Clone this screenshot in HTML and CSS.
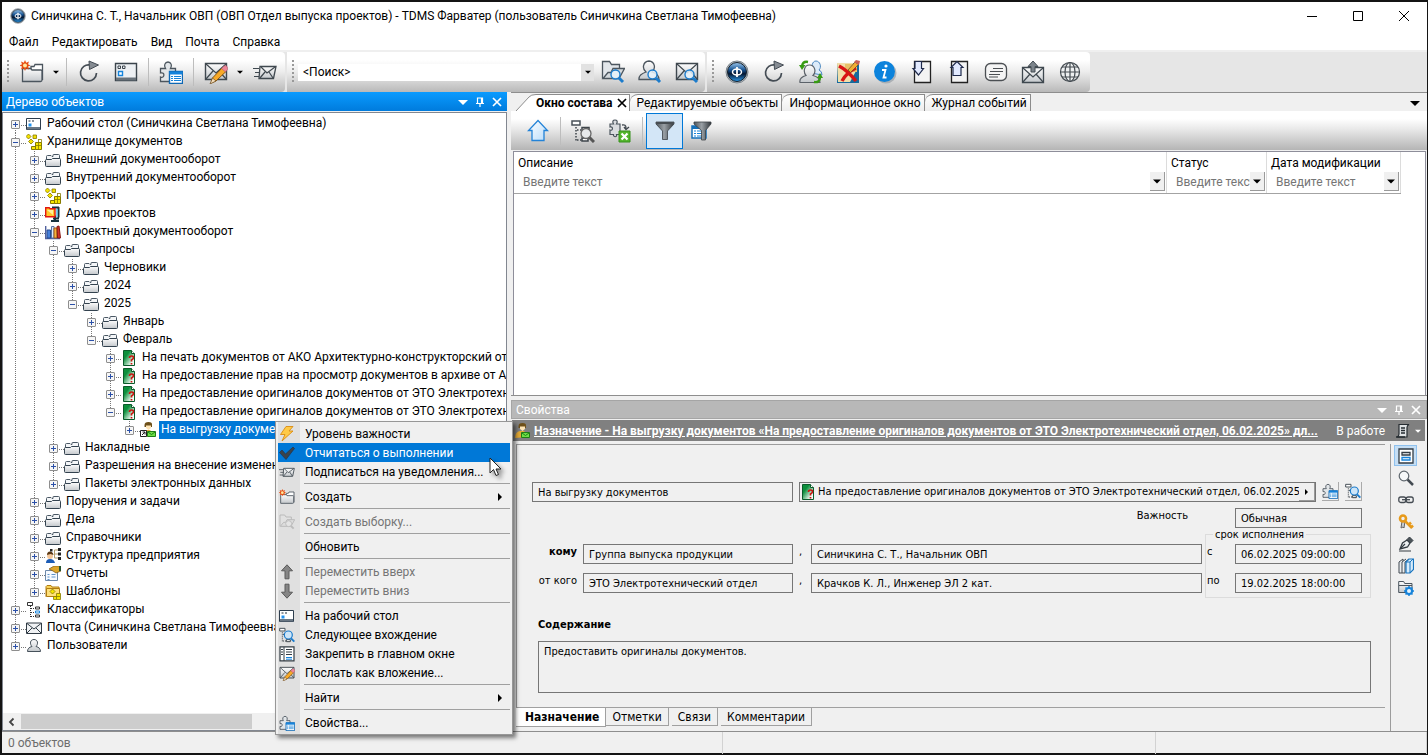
FILE: index.html
```html
<!DOCTYPE html>
<html lang="ru">
<head>
<meta charset="utf-8">
<title>TDMS Фарватер</title>
<link rel="stylesheet" href="styles.css">
</head>
<body>
<svg class="sprite" aria-hidden="true">
  <defs>
    <linearGradient id="g-orb" x1="0" y1="0" x2="0" y2="1"><stop offset="0" stop-color="#9cc8ee"/><stop offset=".4" stop-color="#14508f"/><stop offset=".6" stop-color="#04152f"/><stop offset="1" stop-color="#2a9cf0"/></linearGradient>
    <linearGradient id="g-gray" x1="0" y1="0" x2="0" y2="1"><stop offset="0" stop-color="#fdfdfd"/><stop offset="1" stop-color="#c4c8cc"/></linearGradient>
    <linearGradient id="g-doc" x1="0" y1="0" x2="1" y2="1"><stop offset=".3" stop-color="#0c8f3c"/><stop offset=".8" stop-color="#f4fbf5"/></linearGradient>
    <linearGradient id="g-funnel" x1="0" y1="0" x2="1" y2="0"><stop offset="0" stop-color="#4e555b"/><stop offset=".45" stop-color="#9aa0a5"/><stop offset="1" stop-color="#33383c"/></linearGradient>
    <linearGradient id="g-sky" x1="0" y1="0" x2="1" y2="1"><stop offset="0" stop-color="#fff"/><stop offset="1" stop-color="#b9dcfa"/></linearGradient>
  </defs>
  <symbol id="lens" viewBox="0 0 24 24"><path d="M18 18l4 4" stroke="#1c7ccc" stroke-width="3"/><circle cx="14.5" cy="14.5" r="4.5" fill="#e8f3fc" fill-opacity=".85" stroke="#1c7ccc" stroke-width="1.4"/></symbol>
  <symbol id="star" viewBox="0 0 24 24"><path d="M5 0l1.200 2.800L9 1.600 8 4.300 10.500 5.500 8 6.600 9 9.500 6.200 8.300 5 11 3.800 8.300 1 9.500 2 6.600-.5 5.500 2 4.300 1 1.600l2.800 1.200z" fill="#e84e10"/><circle cx="5" cy="5.500" r="2" fill="#ffe9a0"/></symbol>
  <symbol id="new-folder" viewBox="0 0 24 24"><path d="M11 10V6.500h3l1-2h7.500V20" fill="#fff" stroke="#4b555e" stroke-width="1.300"/><path d="M2.500 21.500v-12q0-1 1-1h7l1.500 1.500h9q1 0 1 1v9q0 1.500-1.500 1.500z" fill="url(#g-gray)" stroke="#4b555e" stroke-width="1.300"/><use href="#star" width="24" height="24"/></symbol>
  <symbol id="refresh" viewBox="0 0 24 24"><path d="M19.500 13a8 8 0 1 1-6.500-8" fill="none" stroke="#444c54" stroke-width="1.700"/><path d="M12 1l9.500 4-9 4.500z" fill="#858b92" stroke="#444c54"/></symbol>
  <symbol id="window" viewBox="0 0 24 24"><path d="M1.500 3.500h21v17h-21z" fill="#edf0f3" stroke="#3b444c" stroke-width="1.400"/><path d="M2 17.500h20v3H2z" fill="#69727a"/><path d="M4 6h2.500v2.500H4zM8.500 6H11v2.500H8.500z" fill="none" stroke="#3b444c"/><path d="M4.500 11.500h4v4h-4z" fill="#fff" stroke="#1684dc" stroke-width="1.400"/></symbol>
  <symbol id="puzzle" viewBox="0 0 24 24"><path d="M1.500 21.500V17c4 2 5-5.500 0-4V8.500h5c-2-3-.5-6.500 2.500-6.500s4.500 3.500 2.500 6.500h5v13z" fill="#e2e6e9" stroke="#4b555e" stroke-width="1.300"/><path d="M10.500 11.500h13v12h-13z" fill="#fff" stroke="#0f68b4" stroke-width="1.400"/><path d="M10.500 11.500h13v3h-13z" fill="#1683da"/><path d="M12 16.500h2m1 0h7M12 18.500h2m1 0h7M12 20.500h2m1 0h7" stroke="#1683da"/></symbol>
  <symbol id="mail" viewBox="0 0 24 24"><path d="M1.500 3.500h21v16h-21z" fill="url(#g-gray)" stroke="#3f484f" stroke-width="1.400"/><path d="M2 4l10 9L22 4M2 19l7-8m13 8l-7-8" fill="none" stroke="#3f484f" stroke-width="1.200"/></symbol>
  <symbol id="mail-pencil" viewBox="0 0 24 24"><use href="#mail" width="24" height="24"/><path d="M7 23l1.500-5L18 8l4 3.500L12 21z" fill="#f7a928" stroke="#855411"/><path d="M6 24l2.500-6 3.500 3z" fill="#f5dfbd" stroke="#6c4a20" stroke-width=".7"/><path d="M17.500 8.500L20 6q2-1 3 .5t.5 3L21.500 12z" fill="#ed8798" stroke="#a85566" stroke-width=".5"/></symbol>
  <symbol id="mail-send" viewBox="0 0 24 24"><path d="M7 6.500h16l-2.500 12H6z" fill="url(#g-gray)" stroke="#3f484f" stroke-width="1.300"/><path d="M8 7l6 6 8-6M7 18l5-6m8 6l-4-6M0 8.500h6M2 12.500h5M1 16.500h5" fill="none" stroke="#3f484f" stroke-width="1.200"/></symbol>
  <symbol id="folder-search" viewBox="0 0 24 24"><path d="M1.500 18.500v-17h7l2 3h8v4" fill="#e2e6ea" stroke="#4b555e" stroke-width="1.300"/><path d="M2 18.500l5-6h3l2-4h11.500L18 18.500z" fill="#d5dade" stroke="#4b555e" stroke-width="1.300"/><use href="#lens" width="24" height="24"/></symbol>
  <symbol id="user-search" viewBox="0 0 24 24"><path d="M1 19.500q-.5-5 7-7.500c-4-3-3.500-10.500 3-11 6 .5 7 7.500 3 11q7 2 7 7.500z" fill="url(#g-gray)" stroke="#4b555e" stroke-width="1.300"/><use href="#lens" width="24" height="24"/></symbol>
  <symbol id="mail-search" viewBox="0 0 24 24"><use href="#mail" width="24" height="24"/><use href="#lens" width="24" height="24"/></symbol>
  <symbol id="orb" viewBox="0 0 24 24"><circle cx="12" cy="12" r="11" fill="#b7bec4" stroke="#7b848b"/><circle cx="12" cy="12" r="9.500" fill="url(#g-orb)" stroke="#15202b"/><ellipse cx="12" cy="12" rx="4.500" ry="3" fill="none" stroke="#fff" stroke-width="1.500"/><path d="M12 7v10" stroke="#fff" stroke-width="1.800"/></symbol>
  <symbol id="users" viewBox="0 0 24 24"><path d="M12 13q0-2 3-3c-3-3-2-9 2-9s6 6 3 9q3 1 3 5z" fill="#dcebf9" stroke="#4a87c0"/><path d="M1 22.500q-1-5 6-7C4 12 5 5 10.500 5s7 7 3.500 10.500q7 2 7 7z" fill="url(#g-gray)" stroke="#5b6269" stroke-width="1.200"/><path d="M9 2Q4 1 3 6M15 22q6 1 6-5" fill="none" stroke="#379b12" stroke-width="2.400"/><path d="M0 5h6.500L3 10zM18 18h6l-3-5z" fill="#379b12"/></symbol>
  <symbol id="denied" viewBox="0 0 24 24"><path d="M1 3h22v20H1z" fill="#166a9d"/><path d="M1 3h16l3 8-6 11H2z" fill="#f1dfab"/><path d="M9 4h12v8H9z" fill="#e8c169"/><path d="M3 6q8 4 17 15M20 8Q11 12 6 21" fill="none" stroke="#d81515" stroke-width="3.500"/><path d="M12 10l7-8 3.500 2.500-8 8z" fill="#f1ad32" stroke="#654321" stroke-width=".7"/><path d="M18 2l2-2 4 1-1 4z" fill="#c76058"/></symbol>
  <symbol id="info" viewBox="0 0 24 24"><circle cx="13" cy="13" r="10.500" fill="#8d969e" opacity=".6"/><circle cx="11.500" cy="11.500" r="10.500" fill="#0c83dc"/><circle cx="13" cy="6" r="1.600" fill="#fff"/><path d="M9 10h3.500l-2 7.500h3" fill="none" stroke="#fff" stroke-width="1.800"/></symbol>
  <symbol id="page-down" viewBox="0 0 24 24"><path d="M4.500 1.500h16v21h-16z" fill="#f3f3f3" stroke="#222" stroke-width="1.300"/><path d="M5 1.500h6.500v7h2L8.500 15 3 8.500h2z" fill="#e2eaff" stroke="#1f2a4c" stroke-width="1.200"/></symbol>
  <symbol id="page-up" viewBox="0 0 24 24"><path d="M4.500 1.500h16v21h-16z" fill="#f3f3f3" stroke="#222" stroke-width="1.300"/><path d="M6 15.500h8v-8h2L10 1.500 4 7.500h2z" fill="#e2eaff" stroke="#1f2a4c" stroke-width="1.200"/></symbol>
  <symbol id="chat" viewBox="0 0 24 24"><rect x="1.500" y="3.500" width="21" height="17" rx="5" fill="#f4f4f4" stroke="#4b4f53" stroke-width="1.300"/><path d="M9 8.500h10M6 11.500h13M5 14.500h11M5 17h9" stroke="#4b4f53" stroke-width="1.200"/></symbol>
  <symbol id="mail-up" viewBox="0 0 24 24"><path d="M1.500 7.500h21v15h-21z" fill="url(#g-gray)" stroke="#3f484f" stroke-width="1.300"/><path d="M2 8l10 9L22 8M2 22l7-8m13 8l-7-8" fill="none" stroke="#3f484f" stroke-width="1.200"/><path d="M12 1l5 5.500h-3V12h-4V6.500H7z" fill="#7c848b" stroke="#444c53"/></symbol>
  <symbol id="globe" viewBox="0 0 24 24"><g fill="none" stroke="#444b51" stroke-width="1.200"><circle cx="12" cy="12" r="9.500" fill="#eef0f1"/><ellipse cx="12" cy="12" rx="5" ry="9.500"/><path d="M12 2.500v19M2.500 12h19M4 7h16M4 17h16"/></g></symbol>
  <symbol id="up" viewBox="0 0 24 24"><path d="M12 1.500l9.500 10H18v10H6v-10H2.500z" fill="url(#g-sky)" stroke="#2383d8" stroke-width="1.300"/></symbol>
  <symbol id="tree-search" viewBox="0 0 24 24"><path d="M1 2h8v4H1z" fill="#fff" stroke="#4a5259" stroke-width="1.500"/><path d="M5 8v14M6 11h4M6 21h5" stroke="#3c4349" stroke-width="1.500" stroke-dasharray="1.500 1.500"/><path d="M11 8.500h7v3h-7zM11 19h6v3h-6z" fill="#fff" stroke="#3c4349" stroke-width="1.500"/></symbol>
  <symbol id="tree-lens" viewBox="0 0 24 24"><use href="#tree-search" width="24" height="24"/><path d="M18 17l5 5" stroke="#1c7ccc" stroke-width="3"/><circle cx="14" cy="12" r="6" fill="#cde5f8" stroke="#1c7ccc" stroke-width="1.800"/></symbol>
  <symbol id="tree-lens-gray" viewBox="0 0 24 24"><use href="#tree-search" width="24" height="24"/><path d="M18 18l5 5" stroke="#555" stroke-width="3"/><circle cx="15" cy="14.500" r="5" fill="#e7e9eb" stroke="#666" stroke-width="1.300"/></symbol>
  <symbol id="puzzle-x" viewBox="0 0 24 24"><path d="M2 15.500V11c3 1.500 3.500-4 0-3V5h3.500C4 2.500 5 1 7 1s3 1.500 1.500 4H12v10.500H8.500c1 3-3.500 3-3 0z" fill="#d9dcdf" stroke="#4b555e" stroke-width="1.200"/><path d="M14 6q4-1 4 3m-2-1l2 2.500 3-2.500" fill="none" stroke="#414950" stroke-width="1.300"/><path d="M11 12h11v11H11z" fill="#54b52d" stroke="#34901a"/><path d="M13.500 14.500l6 6m0-6l-6 6" stroke="#fff" stroke-width="2.200"/></symbol>
  <symbol id="funnel" viewBox="0 0 24 24"><path d="M3 3h18v2l-6.500 7v8.500h-5V12L3 5z" fill="url(#g-funnel)" stroke="#3c4247" stroke-width=".8"/><path d="M3 3h18v2H3z" fill="#474d52"/></symbol>
  <symbol id="funnel-table" viewBox="0 0 24 24"><path d="M2 7h14v12H2z" fill="#fff" stroke="#1470ba" stroke-width="1.500"/><path d="M2 7h14v3H2z" fill="#1470ba"/><path d="M4 12h2m1 0h9M4 14.500h2m1 0h9M4 17h2m1 0h9" stroke="#1683da"/><path d="M4 3h17v2l-5.500 6.500V21h-4v-9.500L4 5z" fill="url(#g-funnel)" stroke="#3c4247" stroke-width=".8"/></symbol>

  <symbol id="desk" viewBox="0 0 16 16"><path d="M.5 2.500h14v11H.5z" fill="#fff" stroke="#2d3d4d"/><path d="M1 11h13v2.500H1z" fill="#6a7784"/><path d="M2.500 4.500h2v1h-2zM6 4.500h2v1H6z" fill="#1d2d3d"/><path d="M2.500 7.500h3v3h-3z" fill="#2192ef"/></symbol>
  <symbol id="blocks" viewBox="0 0 16 16"><path d="M2.500 0L5 2.500 2.500 5 0 2.500zM7 1h3.500v3.500H7zM5 5l2.500 2.500L5 10 2.500 7.500z" fill="#f4e100" stroke="#867a00" stroke-width=".8"/><path d="M9.500 15.500v-7h6v7zM5.500 15.500v-3h4v3z" fill="#f8e800" stroke="#867a00"/><path d="M12.500 5v10M9 11.500h6M12.500 5.500h3v3" fill="none" stroke="#867a00" stroke-width=".8"/></symbol>
  <symbol id="folder" viewBox="0 0 16 16"><path d="M1.500 8V4.500q0-1 1-1h3.500l1 1h1V3q0-.5.500-.5h5q1 0 1 1V8" fill="#f4f6f8" stroke="#4b5865"/><path d="M.5 8.500q0-1 1-1h5l1-1h7q1 0 1 1v6q0 1-1 1h-13q-1 0-1-1z" fill="url(#g-gray)" stroke="#33424f"/></symbol>
  <symbol id="archive" viewBox="0 0 16 16"><path d="M7 1.500h7M13.500 1v10.500M8 12.500h6M10 9.500v6M6 15h8" stroke="#17323e" stroke-width="2"/><path d="M12 3v8" stroke="#53bfe7" stroke-width="1.500"/><path d="M.7 1.700h3.500l1 1H10v8H.7z" fill="#ffc729" stroke="#e21610" stroke-width="1.400"/><path d="M2 4l6 5V4z" fill="#fff09b"/></symbol>
  <symbol id="books" viewBox="0 0 16 16"><path d="M.7 2v12.500H15" fill="none" stroke="#51619e" stroke-width="1.400"/><path d="M2 6h3.500v8H2z" fill="#4680da" stroke="#244b91"/><path d="M6.500 2.500H9V14H6.500z" fill="#ddeafc" stroke="#5772a1"/><path d="M9 4h3v10H9z" fill="#f5b23a" stroke="#9d5818"/><path d="M12 2.500l2-.5 1.500 12h-3z" fill="#d4342a" stroke="#86160f"/></symbol>
  <symbol id="doc" viewBox="0 0 16 16"><path d="M2.500.5h8l3 3v12h-11z" fill="url(#g-doc)" stroke="#0a5a2a"/><path d="M10.500.5v3h3" fill="#fff" stroke="#0a5a2a"/><path d="M8.500 8q0-2 2-2t2 1.500-2 2.500v1.500M10.500 13v1.500" fill="none" stroke="#c81712" stroke-width="1.700"/></symbol>
  <symbol id="assign" viewBox="0 0 16 16"><path d="M4.500 3q0-3 4-3t3.500 3v2H4.500z" fill="#6e5019"/><path d="M6 3.500h5v2.500l-2.500 2L6 6z" fill="#ffe5b5"/><path d="M1 15q0-6 5-7h4l3 3v3z" fill="#e3a936"/><path d="M7.500 9.500h8v5h-8z" fill="#6ee046" stroke="#1e7e16"/><path d="M8 10l3.500 2.500L15 10" fill="none" stroke="#1e7e16"/></symbol>
  <symbol id="assign-link" viewBox="0 0 16 16"><use href="#assign" width="16" height="16"/><path d="M.5 8.500h6v6h-6z" fill="#fff" stroke="#222"/><path d="M2 13l3-3m-2.500 0H5v2.500" fill="none" stroke="#222"/></symbol>
  <symbol id="org" viewBox="0 0 16 16"><path d="M1 15q0-4 4-4t5 4z" fill="#1b5bb5"/><circle cx="5" cy="8" r="3" fill="#f4c79a"/><path d="M2 7q0-3.500 3-3.500T8.500 7l-3-1z" fill="#5a3713"/><path d="M9.500 2v8M9.500 2h4M9.500 6h4M9.500 10h4" stroke="#b59c6a"/><path d="M13 0h3v3h-3zM13 4.500h3v3h-3zM13 9h3v3h-3zM5 1h2.500v2.500H5z" fill="#222"/></symbol>
  <symbol id="report" viewBox="0 0 16 16"><path d="M.5 4.500h12v10H.5z" fill="#f6faff" stroke="#6d89aa"/><path d="M2.500 8.500h2m2 0h4m-8 2.500h2m2 0h4m-8 2.500h2" stroke="#5f92c9"/><path d="M4 3l5-3h7v5l-5 2-3-2z" fill="#dca52a" stroke="#76500f" stroke-width=".7"/><path d="M14 0h2v5h-2z" fill="#25532d"/></symbol>
  <symbol id="template" viewBox="0 0 16 16"><path d="M1 12.500V2.500l1-1h4l1 1.500h7v2H4z" fill="#f8d257" stroke="#b17c12"/><path d="M1.500 12.500v-8h13v8z" fill="#ffe17b" stroke="#b17c12"/><path d="M7.500 5L10 7.500 7.500 10 5 7.500zM8.500 15.500v-3h3v-3h4v6zM11.500 12v3M12 12.500h3" fill="#f5e400" stroke="#867a00" stroke-width=".8"/></symbol>
  <symbol id="classif" viewBox="0 0 16 16"><path d="M1.500.5h5v3h-5z" fill="#fff" stroke="#333"/><path d="M4.500 4v11M5 6.500h3M5 10.500h3M5 14.500h3" stroke="#333" stroke-dasharray="1 1"/><path d="M9.500 5h4v2h-4zM9.500 13h4v2h-4z" fill="#fff" stroke="#333"/><path d="M9.500 9h4v2h-4z" fill="#fff" stroke="#1683da"/></symbol>
  <symbol id="mail16" viewBox="0 0 16 16"><path d="M.5 3h15v10.500H.5z" fill="#f0f2f4" stroke="#303b45"/><path d="M1 3.500L8 9l7-5.500M1 13l5-5m9 5l-5-5" fill="none" stroke="#303b45"/></symbol>
  <symbol id="user" viewBox="0 0 16 16"><path d="M1.500 13.500q0-4 4.500-5C3.500 6 4 1.500 8 1.500s4.500 4.500 2 7q4.500 1 4.500 5z" fill="url(#g-gray)" stroke="#46515b"/></symbol>
  <symbol id="bolt" viewBox="0 0 16 16"><path d="M7 .5h7L10 5h4L3 15l3-6.500H1.500z" fill="#ffca46" stroke="#d98b12" stroke-width=".9"/></symbol>
  <symbol id="check" viewBox="0 0 16 16"><path d="M.5 7.500L3 5l3.500 4L14 2l1.500 1.500L7 14.500z" fill="#3b434a" stroke="#1f3550" stroke-width=".7"/></symbol>
  <symbol id="arrow-up" viewBox="0 0 16 16"><path d="M8 .800l5.500 6H10v8H6v-8H2.500z" fill="#858585" stroke="#5a5a5a"/></symbol>
  <symbol id="arrow-down" viewBox="0 0 16 16"><path d="M8 15.200l5.500-6H10v-8H6v8H2.500z" fill="#858585" stroke="#5a5a5a"/></symbol>
  <symbol id="dock" viewBox="0 0 16 16"><path d="M1 .800h14v14H1z" fill="#fff" stroke="#333c44" stroke-width="1.200"/><path d="M5 1v14M7 3.500h6M7 6h6M7 8.500h6M2 3.500h2M2 6h2M2 8.500h2" stroke="#333c44"/><path d="M7 11.500h6M7 13.200h6" stroke="#1683da"/></symbol>
  <symbol id="card" viewBox="0 0 16 16"><path d="M1 1h14v14H1z" fill="#fff" stroke="#333c44" stroke-width="1.300"/><path d="M4 4.500h8v2.500H4z" fill="#fff" stroke="#333c44" stroke-width="1.300"/><path d="M4 9.500h8V12H4z" fill="#fff" stroke="#1683da" stroke-width="1.300"/></symbol>
  <symbol id="mag" viewBox="0 0 16 16"><path d="M9.500 9.500L15 15" stroke="#444b52" stroke-width="2.500"/><circle cx="6" cy="6" r="4.800" fill="#f6f8f9" stroke="#5f676e" stroke-width="1.200"/></symbol>
  <symbol id="chain" viewBox="0 0 16 16"><g fill="none" stroke="#444b52" stroke-width="1.300"><rect x=".8" y="5" width="7" height="5.500" rx="2"/><rect x="8.200" y="5" width="7" height="5.500" rx="2"/><path d="M4 7.700h8"/></g></symbol>
  <symbol id="key" viewBox="0 0 16 16"><path d="M4 7l-1 7 2-1 1 1 1-7z" fill="#c8ccd0" stroke="#666"/><circle cx="5" cy="4.500" r="3" fill="none" stroke="#e79a1b" stroke-width="2.600"/><path d="M7 7l7 7m-3-3.500l2-2m0 5l2-2" stroke="#e79a1b" stroke-width="2.500"/></symbol>
  <symbol id="pen" viewBox="0 0 16 16"><path d="M2 13l2.500-6L9 4l3 3-2.500 4z" fill="#edf0f2" stroke="#343c43" stroke-width="1.300"/><path d="M9 3.500L11.500 1 15 4.500 12.500 7z" fill="#4b5359" stroke="#343c43"/><path d="M2.500 12.500L7 8M1 15h12" stroke="#343c43" stroke-width="1.200"/></symbol>
  <symbol id="volumes" viewBox="0 0 16 16"><path d="M1 15V4l4-3v2M1 15h3V4l4-3M4 15h3V4l4-3" fill="#e9edf0" stroke="#404950"/><path d="M8 4l3-3h4.500v10.500L12 15H8z" fill="#d8ecfb" stroke="#1875bf" stroke-width="1.200"/><path d="M12 4v11M8 4h4l3-3" fill="none" stroke="#1875bf"/></symbol>
  <symbol id="folder-gear" viewBox="0 0 16 16"><path d="M.7 12.500V1.500h5l1 2H14v9z" fill="url(#g-gray)" stroke="#4b555e"/><path d="M1 5.500h13" stroke="#4b555e"/><circle cx="11" cy="11" r="3" fill="#e6f3fc" stroke="#1683da" stroke-width="2"/><path d="M11 6v2m0 6v2M6 11h2m6 0h2M7.500 7.500L9 9m4 4l1.500 1.500m0-7L13 9m-4 4l-1.500 1.500" stroke="#1683da" stroke-width="1.500"/></symbol>
  <symbol id="scroll" viewBox="0 0 16 16"><path d="M4 1.500h10q-2 1-2 3v9.500H2q2-.5 2-3z" fill="#dfe2e4" stroke="#262c31" stroke-width="1.200"/><path d="M6 5h4M6 7.500h4M6 10h4M1 14h9" stroke="#262c31" stroke-width="1.300"/></symbol>
  <symbol id="pin" viewBox="0 0 10 10"><path d="M2.500 6V1h5v5M1 6.500h8M5 7v3M6.500 1v5" fill="none" stroke="currentColor" stroke-width="1.200"/></symbol>
  <symbol id="close" viewBox="0 0 10 10"><path d="M1 1l8 8M9 1L1 9" fill="none" stroke="currentColor" stroke-width="1.700"/></symbol>
  <symbol id="caret" viewBox="0 0 10 10"><path d="M0 3h10L5 8z" fill="currentColor"/></symbol>
</svg>

<div class="window">
  <header class="titlebar">
    <svg class="i16"><use href="#orb"/></svg>
    <h1 class="caption">Синичкина С. Т., Начальник ОВП (ОВП Отдел выпуска проектов) - TDMS Фарватер (пользователь Синичкина Светлана Тимофеевна)</h1>
    <button class="sys" aria-label="Свернуть"><svg class="i12" viewBox="0 0 12 12"><path d="M1 6.500h10" stroke="#000"/></svg></button>
    <button class="sys" aria-label="Развернуть"><svg class="i12" viewBox="0 0 12 12"><path d="M1.500 1.500h9v9h-9z" fill="none" stroke="#000"/></svg></button>
    <button class="sys" aria-label="Закрыть"><svg class="i12" viewBox="0 0 12 12"><path d="M1 1l10 10M11 1L1 11" stroke="#000"/></svg></button>
  </header>
  <nav class="menubar">
    <button>Файл</button><button>Редактировать</button><button>Вид</button><button>Почта</button><button>Справка</button>
  </nav>

  <div class="bands">
    <div class="band">
      <span class="grip"></span>
      <button class="tool" aria-label="Создать"><svg class="i24"><use href="#new-folder"/></svg></button>
      <button class="drop" aria-label="Варианты создания"><svg class="i6"><use href="#caret"/></svg></button>
      <span class="rule"></span>
      <button class="tool" aria-label="Обновить"><svg class="i24"><use href="#refresh"/></svg></button>
      <button class="tool" aria-label="Рабочий стол"><svg class="i24"><use href="#window"/></svg></button>
      <span class="rule"></span>
      <button class="tool" aria-label="Свойства"><svg class="i24"><use href="#puzzle"/></svg></button>
      <span class="rule"></span>
      <button class="tool" aria-label="Написать письмо"><svg class="i24"><use href="#mail-pencil"/></svg></button>
      <button class="drop" aria-label="Варианты письма"><svg class="i6"><use href="#caret"/></svg></button>
      <button class="tool" aria-label="Подписаться"><svg class="i24"><use href="#mail-send"/></svg></button>
    </div>
    <div class="band finder">
      <span class="grip"></span>
      <div class="search">
        <input type="text" value="&lt;Поиск&gt;" aria-label="Поиск">
        <button class="arrow" aria-label="Список поиска"><svg class="i6"><use href="#caret"/></svg></button>
      </div>
      <button class="tool" aria-label="Поиск в папках"><svg class="i24"><use href="#folder-search"/></svg></button>
      <button class="tool" aria-label="Поиск пользователей"><svg class="i24"><use href="#user-search"/></svg></button>
      <button class="tool" aria-label="Поиск писем"><svg class="i24"><use href="#mail-search"/></svg></button>
    </div>
    <div class="band">
      <span class="grip"></span>
      <button class="tool" aria-label="Фарватер"><svg class="i24"><use href="#orb"/></svg></button>
      <button class="tool" aria-label="Обновить окно"><svg class="i24"><use href="#refresh"/></svg></button>
      <button class="tool" aria-label="Сменить пользователя"><svg class="i24"><use href="#users"/></svg></button>
      <button class="tool" aria-label="Отменить правку"><svg class="i24"><use href="#denied"/></svg></button>
      <button class="tool" aria-label="Справка"><svg class="i24"><use href="#info"/></svg></button>
      <button class="tool" aria-label="Загрузить"><svg class="i24"><use href="#page-down"/></svg></button>
      <button class="tool" aria-label="Выгрузить"><svg class="i24"><use href="#page-up"/></svg></button>
      <button class="tool" aria-label="Сообщения"><svg class="i24"><use href="#chat"/></svg></button>
      <button class="tool" aria-label="Отправить"><svg class="i24"><use href="#mail-up"/></svg></button>
      <button class="tool" aria-label="Веб"><svg class="i24"><use href="#globe"/></svg></button>
    </div>
  </div>

  <main class="work">
    <section class="left">
      <div class="pane-title blue">
        <h2>Дерево объектов</h2>
        <button aria-label="Меню панели"><svg class="i10"><use href="#caret"/></svg></button>
        <button aria-label="Закрепить панель"><svg class="i10"><use href="#pin"/></svg></button>
        <button aria-label="Закрыть панель"><svg class="i10"><use href="#close"/></svg></button>
      </div>
      <div class="treebox">
        <ul class="tree">
          <li><div class="node"><button class="exp plus" aria-label="Раскрыть"></button><svg class="i16"><use href="#desk"/></svg><span>Рабочий стол (Синичкина Светлана Тимофеевна)</span></div></li>
          <li><div class="node"><button class="exp" aria-label="Свернуть"></button><svg class="i16"><use href="#blocks"/></svg><span>Хранилище документов</span></div>
            <ul>
              <li><div class="node"><button class="exp plus" aria-label="Раскрыть"></button><svg class="i16"><use href="#folder"/></svg><span>Внешний документооборот</span></div></li>
              <li><div class="node"><button class="exp plus" aria-label="Раскрыть"></button><svg class="i16"><use href="#folder"/></svg><span>Внутренний документооборот</span></div></li>
              <li><div class="node"><button class="exp plus" aria-label="Раскрыть"></button><svg class="i16"><use href="#blocks"/></svg><span>Проекты</span></div></li>
              <li><div class="node"><button class="exp plus" aria-label="Раскрыть"></button><svg class="i16"><use href="#archive"/></svg><span>Архив проектов</span></div></li>
              <li><div class="node"><button class="exp" aria-label="Свернуть"></button><svg class="i16"><use href="#books"/></svg><span>Проектный документооборот</span></div>
                <ul>
                  <li><div class="node"><button class="exp" aria-label="Свернуть"></button><svg class="i16"><use href="#folder"/></svg><span>Запросы</span></div>
                    <ul>
                      <li><div class="node"><button class="exp plus" aria-label="Раскрыть"></button><svg class="i16"><use href="#folder"/></svg><span>Черновики</span></div></li>
                      <li><div class="node"><button class="exp plus" aria-label="Раскрыть"></button><svg class="i16"><use href="#folder"/></svg><span>2024</span></div></li>
                      <li><div class="node"><button class="exp" aria-label="Свернуть"></button><svg class="i16"><use href="#folder"/></svg><span>2025</span></div>
                        <ul>
                          <li><div class="node"><button class="exp plus" aria-label="Раскрыть"></button><svg class="i16"><use href="#folder"/></svg><span>Январь</span></div></li>
                          <li><div class="node"><button class="exp" aria-label="Свернуть"></button><svg class="i16"><use href="#folder"/></svg><span>Февраль</span></div>
                            <ul>
                              <li><div class="node"><button class="exp plus" aria-label="Раскрыть"></button><svg class="i16"><use href="#doc"/></svg><span>На печать документов от АКО Архитектурно-конструкторский отдел</span></div></li>
                              <li><div class="node"><button class="exp plus" aria-label="Раскрыть"></button><svg class="i16"><use href="#doc"/></svg><span>На предоставление прав на просмотр документов в архиве от АКО</span></div></li>
                              <li><div class="node"><button class="exp plus" aria-label="Раскрыть"></button><svg class="i16"><use href="#doc"/></svg><span>На предоставление оригиналов документов от ЭТО Электротехнический</span></div></li>
                              <li><div class="node"><button class="exp" aria-label="Свернуть"></button><svg class="i16"><use href="#doc"/></svg><span>На предоставление оригиналов документов от ЭТО Электротехнический</span></div>
                                <ul>
                                  <li><div class="node selected"><button class="exp plus" aria-label="Раскрыть"></button><svg class="i16"><use href="#assign-link"/></svg><span>На выгрузку документов</span></div></li>
                                </ul>
                              </li>
                            </ul>
                          </li>
                        </ul>
                      </li>
                    </ul>
                  </li>
                  <li><div class="node"><button class="exp plus" aria-label="Раскрыть"></button><svg class="i16"><use href="#folder"/></svg><span>Накладные</span></div></li>
                  <li><div class="node"><button class="exp plus" aria-label="Раскрыть"></button><svg class="i16"><use href="#folder"/></svg><span>Разрешения на внесение изменений</span></div></li>
                  <li><div class="node"><button class="exp plus" aria-label="Раскрыть"></button><svg class="i16"><use href="#folder"/></svg><span>Пакеты электронных данных</span></div></li>
                </ul>
              </li>
              <li><div class="node"><button class="exp plus" aria-label="Раскрыть"></button><svg class="i16"><use href="#folder"/></svg><span>Поручения и задачи</span></div></li>
              <li><div class="node"><button class="exp plus" aria-label="Раскрыть"></button><svg class="i16"><use href="#folder"/></svg><span>Дела</span></div></li>
              <li><div class="node"><button class="exp plus" aria-label="Раскрыть"></button><svg class="i16"><use href="#folder"/></svg><span>Справочники</span></div></li>
              <li><div class="node"><button class="exp plus" aria-label="Раскрыть"></button><svg class="i16"><use href="#org"/></svg><span>Структура предприятия</span></div></li>
              <li><div class="node"><button class="exp plus" aria-label="Раскрыть"></button><svg class="i16"><use href="#report"/></svg><span>Отчеты</span></div></li>
              <li><div class="node"><button class="exp plus" aria-label="Раскрыть"></button><svg class="i16"><use href="#template"/></svg><span>Шаблоны</span></div></li>
            </ul>
          </li>
          <li><div class="node"><button class="exp plus" aria-label="Раскрыть"></button><svg class="i16"><use href="#classif"/></svg><span>Классификаторы</span></div></li>
          <li><div class="node"><button class="exp plus" aria-label="Раскрыть"></button><svg class="i16"><use href="#mail16"/></svg><span>Почта (Синичкина Светлана Тимофеевна)</span></div></li>
          <li><div class="node"><button class="exp plus" aria-label="Раскрыть"></button><svg class="i16"><use href="#user"/></svg><span>Пользователи</span></div></li>
        </ul>
        <div class="scroll"><button aria-label="Прокрутить влево"><svg class="i10" viewBox="0 0 10 10"><path d="M6.500 1.500L3 5l3.500 3.500" fill="none" stroke="#444" stroke-width="1.800"/></svg></button><span class="thumb"></span></div>
      </div>
    </section>

    <div class="right">
      <section class="content">
        <div class="tabs">
          <button class="tab active"><svg class="slant" viewBox="0 0 20 17"><path d="M0 17L13 3Q15 .500 20 .500V17z" fill="#fff"/><path d="M0 17L13 3Q15 .500 20 .500" fill="none" stroke="#8c8c8c"/></svg><span>Окно состава</span><svg class="i10"><use href="#close"/></svg></button>
          <button class="tab">Редактируемые объекты</button>
          <button class="tab">Информационное окно</button>
          <button class="tab">Журнал событий</button>
          <button class="tabmenu" aria-label="Список вкладок"><svg class="i10"><use href="#caret"/></svg></button>
        </div>
        <div class="subbar">
          <button class="tool" aria-label="Вверх"><svg class="i24"><use href="#up"/></svg></button>
          <span class="rule"></span>
          <button class="tool" aria-label="Найти в дереве"><svg class="i24"><use href="#tree-lens-gray"/></svg></button>
          <button class="tool" aria-label="Экспорт в Excel"><svg class="i24"><use href="#puzzle-x"/></svg></button>
          <span class="rule"></span>
          <button class="tool on" aria-label="Фильтр"><svg class="i24"><use href="#funnel"/></svg></button>
          <button class="tool" aria-label="Фильтр таблицы"><svg class="i24"><use href="#funnel-table"/></svg></button>
        </div>
        <div class="listbox">
          <table class="list">
            <colgroup><col><col class="c-status"><col class="c-date"></colgroup>
            <thead><tr>
              <th><label for="f1">Описание</label><div class="filter"><input id="f1" type="text" placeholder="Введите текст"><button class="arrow" aria-label="Фильтр описания"><svg class="i8"><use href="#caret"/></svg></button></div></th>
              <th><label for="f2">Статус</label><div class="filter"><input id="f2" type="text" placeholder="Введите текст"><button class="arrow" aria-label="Фильтр статуса"><svg class="i8"><use href="#caret"/></svg></button></div></th>
              <th><label for="f3">Дата модификации</label><div class="filter"><input id="f3" type="text" placeholder="Введите текст"><button class="arrow" aria-label="Фильтр даты"><svg class="i8"><use href="#caret"/></svg></button></div></th>
            </tr></thead>
          </table>
        </div>
      </section>

      <section class="props">
        <div class="pane-title gray">
          <h2>Свойства</h2>
          <button aria-label="Меню панели свойств"><svg class="i10"><use href="#caret"/></svg></button>
          <button aria-label="Закрепить свойства"><svg class="i10"><use href="#pin"/></svg></button>
          <button aria-label="Закрыть свойства"><svg class="i10"><use href="#close"/></svg></button>
        </div>
        <div class="objhead">
          <svg class="i16"><use href="#assign"/></svg>
          <a href="#object">Назначение - На выгрузку документов «На предоставление оригиналов документов от ЭТО Электротехнический отдел, 06.02.2025» дл...</a>
          <span>В работе</span>
          <button aria-label="Журнал"><svg class="i16"><use href="#scroll"/></svg></button>
          <button aria-label="Действия"><svg class="i6"><use href="#caret"/></svg></button>
        </div>
        <div class="propbody">
          <div class="formcol">
            <form class="form">
              <div class="first">
                <input class="box" type="text" readonly aria-label="Вид" value="На выгрузку документов">
                <div class="box combo"><svg class="i16"><use href="#doc"/></svg><input type="text" readonly aria-label="Основание" value="На предоставление оригиналов документов от ЭТО Электротехнический отдел, 06.02.2025"><button type="button" aria-label="Открыть"><svg class="i8" viewBox="0 0 8 8"><path d="M2 1l3 3-3 3z"/></svg></button></div>
                <button class="mini" type="button" aria-label="Свойства объекта"><svg class="i16"><use href="#puzzle"/></svg></button>
                <button class="mini" type="button" aria-label="Показать в дереве"><svg class="i16"><use href="#tree-lens"/></svg></button>
              </div>
              <div class="importance"><label for="imp">Важность</label><input class="box date" id="imp" type="text" readonly value="Обычная"></div>
              <div class="people">
                <div class="who">
                  <label class="strong" for="to">кому</label><input class="box" id="to" type="text" readonly value="Группа выпуска продукции"><span>,</span><input class="box" type="text" readonly aria-label="Получатель" value="Синичкина С. Т., Начальник ОВП">
                  <label for="from">от кого</label><input class="box" id="from" type="text" readonly value="ЭТО Электротехнический отдел"><span>,</span><input class="box" type="text" readonly aria-label="Отправитель" value="Крачков К. Л., Инженер ЭЛ 2 кат.">
                </div>
                <fieldset class="term">
                  <legend>срок исполнения</legend>
                  <div class="termline"><label for="d1">с</label><input class="box date" id="d1" type="text" readonly value="06.02.2025 09:00:00"></div>
                  <div class="termline"><label for="d2">по</label><input class="box date" id="d2" type="text" readonly value="19.02.2025 18:00:00"></div>
                </fieldset>
              </div>
              <label class="strong body-label" for="body">Содержание</label>
              <textarea class="box" id="body" readonly>Предоставить оригиналы документов.</textarea>
            </form>
            <div class="formtabs"><button class="on">Назначение</button><button>Отметки</button><button>Связи</button><button>Комментарии</button></div>
          </div>
          <div class="side">
            <button class="on" aria-label="Карточка"><svg class="i16"><use href="#card"/></svg></button>
            <button aria-label="Просмотр"><svg class="i16"><use href="#mag"/></svg></button>
            <button aria-label="Связи"><svg class="i16"><use href="#chain"/></svg></button>
            <button aria-label="Права"><svg class="i16"><use href="#key"/></svg></button>
            <button aria-label="Подписи"><svg class="i16"><use href="#pen"/></svg></button>
            <button aria-label="Версии"><svg class="i16"><use href="#volumes"/></svg></button>
            <button aria-label="Настройки папки"><svg class="i16"><use href="#folder-gear"/></svg></button>
          </div>
        </div>
      </section>
    </div>
  </main>

  <footer class="status"><span>0 объектов</span><span></span><span></span></footer>

  <div class="context" role="menu">
    <button role="menuitem"><svg class="i16"><use href="#bolt"/></svg><span>Уровень важности</span></button>
    <button role="menuitem" class="hot"><svg class="i16"><use href="#check"/></svg><span>Отчитаться о выполнении</span></button>
    <button role="menuitem"><svg class="i16"><use href="#mail-send"/></svg><span>Подписаться на уведомления...</span></button>
    <hr>
    <button role="menuitem"><svg class="i16"><use href="#new-folder"/></svg><span>Создать</span><svg class="i8" viewBox="0 0 8 8"><path d="M2 0l4 4-4 4z"/></svg></button>
    <hr>
    <button role="menuitem" disabled><svg class="i16 faded"><use href="#folder-search"/></svg><span>Создать выборку...</span></button>
    <hr>
    <button role="menuitem"><svg class="i16"></svg><span>Обновить</span></button>
    <hr>
    <button role="menuitem" disabled><svg class="i16"><use href="#arrow-up"/></svg><span>Переместить вверх</span></button>
    <button role="menuitem" disabled><svg class="i16"><use href="#arrow-down"/></svg><span>Переместить вниз</span></button>
    <hr>
    <button role="menuitem"><svg class="i16"><use href="#desk"/></svg><span>На рабочий стол</span></button>
    <button role="menuitem"><svg class="i16"><use href="#tree-lens"/></svg><span>Следующее вхождение</span></button>
    <button role="menuitem"><svg class="i16"><use href="#dock"/></svg><span>Закрепить в главном окне</span></button>
    <button role="menuitem"><svg class="i16"><use href="#mail-pencil"/></svg><span>Послать как вложение...</span></button>
    <hr>
    <button role="menuitem"><svg class="i16"></svg><span>Найти</span><svg class="i8" viewBox="0 0 8 8"><path d="M2 0l4 4-4 4z"/></svg></button>
    <hr>
    <button role="menuitem"><svg class="i16"><use href="#puzzle"/></svg><span>Свойства...</span></button>
    <svg class="pointer" viewBox="0 0 14 20"><path d="M1 1v15l3.500-3.500L7 18.500l2.500-1L7 12h5z" fill="#fff" stroke="#222"/></svg>
  </div>
</div>
</body>
</html>
```
FILE: styles.css
```css
* { box-sizing: border-box; }

body {
  margin: 0;
  font: 12px/18px Roboto, "Noto Sans", sans-serif;
  color: #000;
}

button, input, textarea { font: inherit; color: inherit; }

button {
  margin: 0;
  padding: 0;
  border: 0;
  background: none;
  display: flex;
  align-items: center;
  justify-content: center;
}

h1, h2 { margin: 0; font: inherit; }

svg { flex: none; display: block; }

.sprite { position: absolute; width: 0; height: 0; }
.i6 { width: 6px; height: 6px; }
.i8 { width: 8px; height: 8px; }
.i10 { width: 10px; height: 10px; }
.i12 { width: 12px; height: 12px; }
.i16 { width: 16px; height: 16px; }
.i24 { width: 24px; height: 24px; }

.window {
  position: relative;
  min-height: 100vh;
  display: flex;
  flex-direction: column;
  background: #f0f0f0;
  border: 2px solid #141414;
  border-right-width: 1px;
}

/* Title and menu */
.titlebar {
  display: flex;
  align-items: center;
  height: 28px;
  padding-left: 8px;
  background: #fff;
}
.caption { flex: 1; margin-left: 5px; white-space: nowrap; overflow: hidden; }
.sys { width: 46px; height: 28px; }

.menubar {
  display: flex;
  gap: 13px;
  height: 22px;
  padding: 3px 7px 0;
  background: #fff;
  border-bottom: 2px solid #efefef;
}

/* Toolbars */
.bands { display: flex; gap: 2px; height: 40px; background: #e6e6e6; }
.band {
  display: flex;
  align-items: center;
  padding: 0 2px 0 5px;
  border-radius: 0 4px 4px 0;
  background: linear-gradient(#fff 20%, #ececec 50%, #b9b9b9);
}
.finder { padding-right: 0; }
.grip {
  width: 2px;
  height: 24px;
  margin-right: 4px;
  background: repeating-linear-gradient(#999 0 2px, transparent 2px 4px);
}
.tool { width: 37px; height: 36px; }
.drop { width: 12px; height: 36px; }
.rule { width: 1px; height: 28px; margin: 0 3px 0 4px; background: #bdbdbd; }

.search { display: flex; width: 296px; height: 17px; background: #fff; }
.search input { flex: 1; min-width: 0; padding: 0 5px; border: 0; background: none; outline: 0; }
.search .arrow { width: 13px; background: #e2e2e2; }

/* Work area */
.work {
  flex: 1;
  display: grid;
  grid-template-columns: minmax(0, 505fr) minmax(0, 916fr);
  gap: 4px;
}

.pane-title { display: flex; align-items: center; gap: 7px; height: 19px; padding: 0 5px 0 4px; color: #fff; }
.pane-title h2 { flex: 1; }
.pane-title.blue { background: linear-gradient(#0a9bff, #007bdc); }
.pane-title.gray { background: #b8b8b8; border: 1px solid #a5a5a5; }

.left { display: flex; flex-direction: column; }
.treebox {
  flex: 1;
  display: flex;
  flex-direction: column;
  margin-top: 1px;
  border: 1px solid #828790;
  background: #fff;
  overflow: hidden;
}

.tree, .tree ul { list-style: none; margin: 0; padding: 0; }
.tree { flex: 1; padding: 2px 0 0 8px; }
.tree ul { margin-left: 19px; }
.tree li {
  background: repeating-linear-gradient(#777 0 1px, transparent 1px 2px) 4px 0 / 1px 100% no-repeat;
}
.tree li:last-child { background-size: 1px 9px; }
.tree > li:first-child { background-position: 4px 9px; }
.node { display: flex; align-items: center; height: 18px; white-space: nowrap; }
.node svg {
  box-sizing: content-box;
  padding-left: 6px;
  background: repeating-linear-gradient(90deg, #777 0 1px, transparent 1px 2px) 1px 9px / 5px 1px no-repeat;
}
.node span { height: 18px; margin-left: 3px; padding: 0 2px; line-height: 16px; }
.node.selected span { background: #0078d7; color: #fff; }
.exp {
  flex: none;
  width: 9px;
  height: 9px;
  border: 1px solid #8e8e8e;
  border-radius: 1px;
  background: linear-gradient(#2b50a8, #2b50a8) center / 5px 1px no-repeat, #f6f6f6;
}
.exp.plus {
  background:
    linear-gradient(#2b50a8, #2b50a8) center / 5px 1px no-repeat,
    linear-gradient(#2b50a8, #2b50a8) center / 1px 5px no-repeat,
    #f6f6f6;
}

.scroll { display: flex; height: 17px; background: #f0f0f0; }
.scroll button { width: 18px; }
.thumb { width: 46%; margin: 1px 0; background: #cdcdcd; }

/* Content list */
.right { display: grid; grid-template-rows: 304px 1fr; gap: 4px; }
.content { display: flex; flex-direction: column; border: 1px solid #8e8e8e; border-width: 1px 0; }

.tabs { display: flex; align-items: flex-end; height: 18px; padding-left: 5px; }
.tab {
  height: 17px;
  padding: 0 3px 0 7px;
  border: 1px solid #8c8c8c;
  border-width: 1px 1px 0 0;
  border-top-left-radius: 8px;
  background: linear-gradient(#fff, #ededed);
}
.tab.active { padding: 0; border-top-width: 0; border-top-left-radius: 0; background: none; font-weight: bold; }
.tab.active span { height: 17px; padding-right: 4px; line-height: 17px; background: #fff; border-top: 1px solid #8c8c8c; }
.tab.active .i10 { box-sizing: content-box; padding: 3px 2px 3px 0; background: #fff; border-top: 1px solid #8c8c8c; }
.slant { width: 20px; height: 17px; }
.tabmenu { width: 10px; height: 16px; margin: 0 7px 0 auto; }

.subbar {
  display: flex;
  align-items: center;
  height: 39px;
  padding-left: 8px;
  background: linear-gradient(#fff 20%, #eaeaea 45%, #b5b5b5);
}
.subbar .tool.on { border: 1px solid #0078d7; background: #d3e6f7; }

.listbox { flex: 1; margin: 1px 1px 0 2px; border: 1px solid #8e8e9a; border-bottom: 0; background: #fff; padding-right: 24px; }
.list { width: 100%; border-collapse: collapse; table-layout: fixed; }
.c-status { width: 100px; }
.c-date { width: 134px; }
.list th { height: 41px; padding: 0 0 1px; border-right: 1px solid #dcdcdc; border-bottom: 1px solid #a3a3a3; text-align: left; font-weight: normal; vertical-align: bottom; }
.list label { display: block; padding-left: 4px; }
.filter { display: flex; height: 20px; }
.filter input { flex: 1; min-width: 0; padding: 0 0 0 9px; border: 0; background: none; outline: 0; }
.filter input::placeholder { color: #757575; opacity: 1; }
.filter .arrow { width: 15px; height: 19px; margin-right: 1px; background: #f0f0f0; border: 1px solid #9a9a9a; border-width: 0 1px 1px 0; }

/* Properties */
.props { display: flex; flex-direction: column; min-width: 0; }
.objhead {
  display: flex;
  align-items: center;
  gap: 4px;
  height: 21px;
  margin: 1px 2px 0 1px;
  padding: 0 4px 0 2px;
  background: #808080;
  color: #fff;
}
.objhead a { flex: 1; min-width: 0; color: #fff; font-weight: bold; white-space: nowrap; overflow: hidden; text-overflow: ellipsis; }
.objhead span { margin-right: 6px; }

.propbody { flex: 1; display: flex; gap: 5px; padding: 3px 3px 0 5px; }
.formcol { flex: 1; min-width: 0; display: flex; flex-direction: column; }
.form {
  flex: 1;
  display: flex;
  flex-direction: column;
  padding: 37px 14px 14px 15px;
  border: 1px solid #9c9c9c;
  border-width: 1px 0 0 1px;
  font: 11px/16px "DejaVu Sans Condensed", "DejaVu Sans", sans-serif;
}
.box { height: 20px; min-width: 0; border: 1px solid #767676; background: #f0f0f0; padding: 0 5px; }
.first { display: grid; grid-template-columns: 261fr 517fr 17px 17px; gap: 6px; padding-right: 9px; }
.combo { display: flex; align-items: center; padding: 0; }
.combo input { flex: 1; min-width: 0; margin-left: 2px; padding: 0; border: 0; background: none; }
.combo button { width: 16px; height: 18px; border-right: 1px solid #999; border-bottom: 1px solid #999; }
.mini { width: 17px; height: 19px; border: 1px solid #aaa; border-width: 0 1px 1px 0; }
.importance { display: flex; gap: 47px; justify-content: flex-end; margin-top: 6px; padding-right: 9px; }
.date { width: 127px; }

.people { display: flex; gap: 3px; }
.who {
  flex: 1;
  display: grid;
  grid-template-columns: 45px 210px 6px 1fr;
  align-content: start;
  gap: 9px 6px;
  padding-top: 16px;
}
.who label { text-align: right; }
.strong { font-weight: bold; }
.term { width: 166px; margin: 0; padding: 3px 8px 4px 1px; border: 1px solid #dcdcdc; }
.term legend { margin-left: 6px; padding: 0 2px; line-height: 13px; }
.termline { display: flex; justify-content: space-between; }
.termline + .termline { margin-top: 9px; }
.body-label { margin: 19px 0 8px 6px; }
textarea.box { flex: 1; min-height: 52px; margin-left: 6px; padding: 2px 5px; resize: none; display: block; }

.formtabs { display: flex; gap: 3px; height: 24px; border-top: 1px solid #a0a0a0; font: 12px/16px "DejaVu Sans Condensed", "DejaVu Sans", sans-serif; }
.formtabs button { height: 18px; padding: 0 6px; border: 1px solid #a0a0a0; border-width: 0 1px 1px 0; }
.formtabs .on { height: 19px; margin-right: -3px; padding-left: 9px; background: #fff; font-weight: bold; }

.side { display: flex; flex-direction: column; gap: 1px; width: 34px; padding: 1px 0 0 3px; border-left: 1px solid #9c9c9c; }
.side button { height: 21px; width: 23px; }
.side .on { background: #c5def4; border: 1px solid #8fc1ee; }

/* Status line */
.status { display: grid; grid-template-columns: 720fr 433fr 271fr; height: 22px; border-top: 1px solid #8e8e8e; color: #6d6d6d; line-height: 22px; }
.status span { padding-left: 6px; border-right: 1px solid #d2d2d2; }

/* Context menu */
.context {
  position: absolute;
  left: 273px;
  top: 419px;
  width: 238px;
  padding: 2px;
  border: 1px solid #979797;
  background: linear-gradient(90deg, #f0f0f0 2px, #e0e0e0 2px 24px, #f0f0f0 24px);
  box-shadow: 3px 3px 4px rgba(0, 0, 0, .5);
}
.context button { width: 100%; height: 19px; padding: 0 6px 0 1px; justify-content: flex-start; }
.context button span { flex: 1; margin-left: 10px; text-align: left; white-space: nowrap; }
.context button:disabled { color: #757575; }
.context .hot { background: #0078d7; color: #fff; }
.context hr { height: 1px; margin: 2px 0 3px 26px; border: 0; background: #a0a0a0; }
.faded { opacity: .3; filter: grayscale(1); }
.pointer { position: absolute; left: 213px; top: 35px; width: 14px; height: 20px; filter: drop-shadow(3px 3px 2px rgba(0, 0, 0, .4)); }
```
